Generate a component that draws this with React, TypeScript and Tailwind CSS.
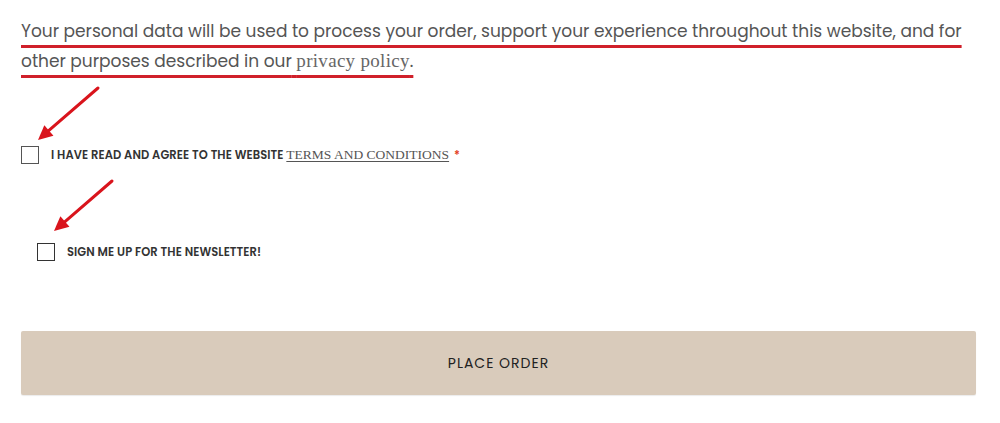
import React from "react";

const Arrow = ({ x1, y1, x2, y2 }: { x1: number; y1: number; x2: number; y2: number }) => {
  const ang = Math.atan2(y2 - y1, x2 - x1);
  const len = 16;
  const spread = 0.45;
  const p1 = [x2 - len * Math.cos(ang - spread), y2 - len * Math.sin(ang - spread)];
  const p2 = [x2 - len * Math.cos(ang + spread), y2 - len * Math.sin(ang + spread)];
  const bx = x2 - (len - 3) * Math.cos(ang);
  const by = y2 - (len - 3) * Math.sin(ang);
  return (
    <g>
      <line x1={x1} y1={y1} x2={bx} y2={by} stroke="#d9141c" strokeWidth={3} strokeLinecap="round" />
      <polygon points={`${x2},${y2} ${p1[0]},${p1[1]} ${p2[0]},${p2[1]}`} fill="#d9141c" />
    </g>
  );
};

const App = () => {
  return (
    <div className="relative w-[1000px] h-[423px] bg-white overflow-hidden font-['Poppins','Open_Sans',sans-serif]">
      <div className="pl-[21px] pr-[22px] pt-[16px]">
        <p className="text-[17px] leading-[30px] text-[#555] underline decoration-[#d0202a] decoration-[3px] underline-offset-[8px]">
          Your personal data will be used to process your order, support your experience throughout this website, and for other purposes described in our{" "}
          <a className="font-['Liberation_Serif',serif] text-[19px] leading-none tracking-[0.3px] text-[#666]">privacy policy</a>.
        </p>

        <div className="mt-[69px] flex items-center">
          <span className="w-[18px] h-[18px] border border-[#555] bg-white shrink-0" />
          <span className="ml-[12px] text-[11.5px] font-semibold tracking-[0.08px] text-[#333] uppercase">
            I have read and agree to the website{" "}
            <a className="font-['Liberation_Serif',serif] font-normal tracking-normal text-[13.5px] text-[#555] underline underline-offset-2">
              TERMS AND CONDITIONS
            </a>
            <span className="ml-[5px] text-[#e2401c]">*</span>
          </span>
        </div>

        <div className="mt-[78px] ml-[16px] flex items-center">
          <span className="w-[18px] h-[18px] border border-[#333] bg-white shrink-0" />
          <span className="ml-[12px] text-[11.5px] font-semibold tracking-[0.08px] text-[#333] uppercase">Sign me up for the newsletter!</span>
        </div>

        <button className="mt-[70px] w-[955px] h-[64px] bg-[#d9cbbb] rounded-[2px] text-[14px] tracking-[1px] text-[#222] shadow-[0_1px_1px_rgba(0,0,0,0.08)]">
          PLACE ORDER
        </button>
      </div>

      <svg className="absolute left-0 top-0 pointer-events-none" width="1000" height="423">
        <Arrow x1={98} y1={88} x2={38} y2={140} />
        <Arrow x1={112} y1={181} x2={54} y2={231} />
      </svg>
    </div>
  );
};

export default App;
